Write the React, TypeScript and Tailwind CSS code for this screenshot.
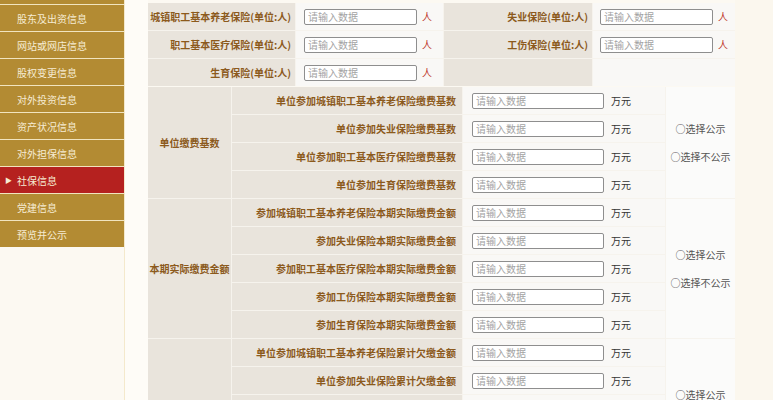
import React from 'react';

const font = "font-['Noto_Sans_CJK_SC','Noto_Sans',sans-serif]";

const navItems = [
  '股东及出资信息',
  '网站或网店信息',
  '股权变更信息',
  '对外投资信息',
  '资产状况信息',
  '对外担保信息',
  '社保信息',
  '党建信息',
  '预览并公示',
];

const sections = [
  {
    title: '单位缴费基数',
    rows: [
      '单位参加城镇职工基本养老保险缴费基数',
      '单位参加失业保险缴费基数',
      '单位参加职工基本医疗保险缴费基数',
      '单位参加生育保险缴费基数',
    ],
  },
  {
    title: '本期实际缴费金额',
    rows: [
      '参加城镇职工基本养老保险本期实际缴费金额',
      '参加失业保险本期实际缴费金额',
      '参加职工基本医疗保险本期实际缴费金额',
      '参加工伤保险本期实际缴费金额',
      '参加生育保险本期实际缴费金额',
    ],
  },
  {
    title: '单位累计欠缴金额',
    rows: [
      '单位参加城镇职工基本养老保险累计欠缴金额',
      '单位参加失业保险累计欠缴金额',
      '单位参加职工基本医疗保险累计欠缴金额',
      '单位参加工伤保险累计欠缴金额',
      '单位参加生育保险累计欠缴金额',
    ],
  },
];

const rowSpan: Record<number, string> = {
  4: 'row-span-4',
  5: 'row-span-5',
};

const DataInput: React.FC<{ width: string }> = ({ width }) => (
  <input
    placeholder="请输入数据"
    className={`${width} h-[16px] rounded-[2px] border border-[#8e8e8e] bg-white px-[3px] text-[10px] text-[#333] outline-none placeholder:text-[#a3a3a3]`}
  />
);

const Sidebar: React.FC = () => (
  <div className="w-[124px] shrink-0 self-start bg-[#b38b33]">
    <div className="h-[4px]" />
    {navItems.map((item) => {
      const active = item === '社保信息';
      return (
        <div
          key={item}
          className={`relative flex h-[27px] items-center border-t border-[#f1e4bf] pl-[17px] text-[10px] text-[#f6ecd3] ${
            active ? 'bg-[#b5211f]' : ''
          }`}
        >
          {active && <span className="absolute left-[5px] text-[7px] text-[#f6ecd3]">▶</span>}
          {item}
        </div>
      );
    })}
  </div>
);

const labelCls = 'flex items-center justify-end bg-[#e9e4dc] pr-[4px] text-[10px] font-bold text-[#8c5a1c]';
const valueCls = 'flex items-center bg-[#f9f8f6]';

const HeadcountTable: React.FC = () => {
  const cells: [string, string][] = [
    ['城镇职工基本养老保险(单位:人)', '失业保险(单位:人)'],
    ['职工基本医疗保险(单位:人)', '工伤保险(单位:人)'],
    ['生育保险(单位:人)', ''],
  ];
  return (
    <div className="grid grid-cols-[147px_147px_148px_142px] auto-rows-[27px] gap-px bg-[#f6f3ed]">
      {cells.map(([a, b], i) => (
        <React.Fragment key={i}>
          <div className={labelCls}>{a}</div>
          <div className={`${valueCls} pl-[8px]`}>
            <DataInput width="w-[113px]" />
            <span className="ml-[5px] text-[10px] text-[#c0392b]">人</span>
          </div>
          <div className={labelCls}>{b}</div>
          <div className={`${valueCls} pl-[7px]`}>
            {b && (
              <>
                <DataInput width="w-[113px]" />
                <span className="ml-[5px] text-[10px] text-[#c0392b]">人</span>
              </>
            )}
          </div>
        </React.Fragment>
      ))}
    </div>
  );
};

const AmountTable: React.FC = () => (
  <div className="mt-px grid grid-cols-[83px_230px_202px_69px] auto-rows-[27px] gap-px bg-[#f6f3ed]">
    {sections.map((s) => (
      <React.Fragment key={s.title}>
        {s.rows.map((row, i) => (
          <React.Fragment key={row}>
            {i === 0 && (
              <div
                className={`${rowSpan[s.rows.length]} flex items-center justify-center bg-[#e9e4dc] text-[10px] font-bold text-[#8c5a1c]`}
              >
                {s.title}
              </div>
            )}
            <div className={`${labelCls} pr-[6px]`}>{row}</div>
            <div className={`${valueCls} pl-[9px]`}>
              <DataInput width="w-[132px]" />
              <span className="ml-[7px] text-[10px] text-[#333]">万元</span>
            </div>
            {i === 0 && (
              <div
                className={`${rowSpan[s.rows.length]} flex flex-col items-center justify-center bg-[#fbfbfa] text-[10px] leading-[28px] text-[#555]`}
              >
                <span>○选择公示</span>
                <span>○选择不公示</span>
              </div>
            )}
          </React.Fragment>
        ))}
      </React.Fragment>
    ))}
  </div>
);

export default function App() {
  return (
    <div className={`${font} flex h-[400px] w-[773px] overflow-hidden bg-[#fcf9f2]`}>
      <Sidebar />
      <div className="w-[24px] shrink-0 border-l border-[#f4e9cc] bg-[#fefcf7]" />
      <div className="w-[587px] shrink-0 pt-[3px]">
        <HeadcountTable />
        <AmountTable />
      </div>
      <div className="flex-1 bg-[#fbf7ee]" />
    </div>
  );
}
